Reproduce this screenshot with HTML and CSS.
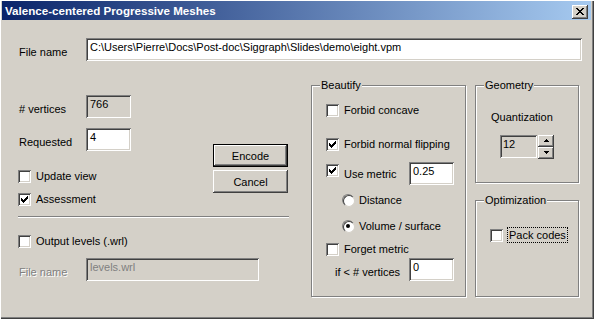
FILE: index.html
```html
<!DOCTYPE html>
<html>
<head>
<meta charset="utf-8">
<title>Valence-centered Progressive Meshes</title>
<link rel="stylesheet" href="styles.css">
</head>
<body>
<div class="window">
  <div class="titlebar">
    <span class="title">Valence-centered Progressive Meshes</span>
    <div class="close"><svg width="8" height="7" viewBox="0 0 8 7" shape-rendering="crispEdges"><path d="M0 0h2v1h-2zM6 0h2v1h-2zM1 1h2v1h-2zM5 1h2v1h-2zM2 2h4v1h-4zM3 3h2v1h-2zM2 4h4v1h-4zM1 5h2v1h-2zM5 5h2v1h-2zM0 6h2v1h-2zM6 6h2v1h-2z" fill="#000"/></svg></div>
  </div>
  <div class="client">
    <div class="file-row">
      <span class="lbl">File name</span>
      <div class="edit path">C:\Users\Pierre\Docs\Post-doc\Siggraph\Slides\demo\eight.vpm</div>
    </div>
    <div class="columns">
      <div class="left">
        <div class="upper">
          <div class="fields">
            <div class="field-row">
              <span class="lbl"># vertices</span>
              <div class="edit small readonly">766</div>
            </div>
            <div class="field-row r2">
              <span class="lbl">Requested</span>
              <div class="edit small">4</div>
            </div>
            <div class="check c-update"><span class="box"></span><span class="ctext">Update view</span></div>
            <div class="check c-assess"><span class="box"><svg width="9" height="9" viewBox="0 0 9 9" shape-rendering="crispEdges"><path d="M7 1h1v1h-1zM6 2h2v1h-2zM1 3h1v1h-1zM5 3h3v1h-3zM1 4h2v1h-2zM4 4h3v1h-3zM1 5h5v1h-5zM2 6h3v1h-3zM3 7h1v1h-1z" fill="#000"/></svg></span><span class="ctext">Assessment</span></div>
          </div>
          <div class="buttons">
            <div class="btn default"><span class="btn-face">Encode</span></div>
            <div class="btn cancel"><span class="btn-face">Cancel</span></div>
          </div>
        </div>
        <div class="separator"></div>
        <div class="check c-output"><span class="box"></span><span class="ctext">Output levels (.wrl)</span></div>
        <div class="field-row r-levels">
          <span class="lbl disabled-text">File name</span>
          <div class="edit levels disabled">levels.wrl</div>
        </div>
      </div>

      <div class="group beautify">
        <span class="legend">Beautify</span>
        <div class="check b1"><span class="box"></span><span class="ctext">Forbid concave</span></div>
        <div class="check b2"><span class="box"><svg width="9" height="9" viewBox="0 0 9 9" shape-rendering="crispEdges"><path d="M7 1h1v1h-1zM6 2h2v1h-2zM1 3h1v1h-1zM5 3h3v1h-3zM1 4h2v1h-2zM4 4h3v1h-3zM1 5h5v1h-5zM2 6h3v1h-3zM3 7h1v1h-1z" fill="#000"/></svg></span><span class="ctext">Forbid normal flipping</span></div>
        <div class="metric-row">
          <span class="box"><svg width="9" height="9" viewBox="0 0 9 9" shape-rendering="crispEdges"><path d="M7 1h1v1h-1zM6 2h2v1h-2zM1 3h1v1h-1zM5 3h3v1h-3zM1 4h2v1h-2zM4 4h3v1h-3zM1 5h5v1h-5zM2 6h3v1h-3zM3 7h1v1h-1z" fill="#000"/></svg></span>
          <span class="ctext metric-text">Use metric</span>
          <div class="edit small">0.25</div>
        </div>
        <div class="radio-row r-dist"><span class="radio"></span><span class="ctext">Distance</span></div>
        <div class="radio-row r-vol"><span class="radio on"></span><span class="ctext">Volume / surface</span></div>
        <div class="check b6"><span class="box"></span><span class="ctext">Forget metric</span></div>
        <div class="threshold-row">
          <span class="lbl thr-text">if &lt; # vertices</span>
          <div class="edit small">0</div>
        </div>
      </div>

      <div class="right">
        <div class="group geometry">
          <span class="legend">Geometry</span>
          <div class="quant">Quantization</div>
          <div class="spin-row">
            <div class="edit spin-edit">12</div>
            <div class="spin-btns">
              <div class="spin-btn"><svg width="5" height="3" viewBox="0 0 5 3" shape-rendering="crispEdges"><path d="M2 0h1v1h-1zM1 1h3v1h-3zM0 2h5v1h-5z" fill="#000"/></svg></div>
              <div class="spin-btn"><svg width="5" height="3" viewBox="0 0 5 3" shape-rendering="crispEdges"><path d="M0 0h5v1h-5zM1 1h3v1h-3zM2 2h1v1h-1z" fill="#000"/></svg></div>
            </div>
          </div>
        </div>
        <div class="group optimization">
          <span class="legend">Optimization</span>
          <div class="check pack"><span class="box"></span><span class="ctext focus">Pack codes</span></div>
        </div>
      </div>
    </div>
  </div>
</div>
</body>
</html>
```
FILE: styles.css
```css
* { box-sizing: border-box; }
html, body { margin: 0; padding: 0; }
body {
  width: 594px;
  height: 319px;
  overflow: hidden;
  background: #D4D0C8;
  font-family: "Liberation Sans", Arial, sans-serif;
  font-size: 11px;
  color: #000;
}

.window {
  width: 594px;
  height: 319px;
  background: #D4D0C8;
  padding: 1px 3px 3px 2px;
  box-shadow: inset 1px 1px 0 #fff, inset -1px -1px 0 #404040, inset -2px -2px 0 #808080;
  display: flex;
  flex-direction: column;
}

/* Title bar */
.titlebar {
  height: 19px;
  flex: none;
  background: linear-gradient(to right, #0A246A, #A6CAF0);
  display: flex;
  align-items: flex-start;
  padding-left: 3px;
  color: #fff;
}
.title {
  font-weight: bold;
  font-size: 11.6px;
  line-height: 19px;
  white-space: nowrap;
}
.close {
  margin-left: auto;
  margin-top: 4px;
  margin-right: 3px;
  width: 16px;
  height: 14px;
  background: #D4D0C8;
  box-shadow: inset -1px -1px 0 #404040, inset 1px 1px 0 #fff, inset -2px -2px 0 #808080;
  display: flex;
  align-items: center;
  justify-content: center;
  padding-bottom: 1px;
}
.close svg { display: block; }

/* Client area */
.client {
  padding: 18px 0 0 16px;
}

.lbl {
  display: block;
  width: 68px;
  padding-left: 1px;
  padding-top: 5px;
  white-space: nowrap;
}

.file-row {
  display: flex;
  align-items: center;
  height: 23px;
}

.edit {
  height: 23px;
  background: #fff;
  box-shadow: inset 1px 1px 0 #808080, inset -1px -1px 0 #fff, inset 2px 2px 0 #404040, inset -2px -2px 0 #D4D0C8;
  padding: 3px 3px 0 4px;
  line-height: 13px;
  white-space: nowrap;
  overflow: hidden;
}
.edit.path { width: 496px; }
.edit.small { width: 45px; }
.edit.readonly { background: #D4D0C8; }
.edit.disabled { background: #D4D0C8; color: #808080; }
.edit.levels { width: 173px; }

.disabled-text {
  color: #808080;
  text-shadow: 1px 1px 0 #fff;
}

.columns {
  display: flex;
  margin-top: 24px;
  align-items: flex-start;
}

/* Left column */
.left {
  width: 271px;
  padding-top: 10px;
}
.upper { display: flex; }
.fields { width: 195px; }
.field-row {
  display: flex;
  align-items: center;
  height: 23px;
}
.field-row.r2 { margin-top: 10px; }

.check {
  display: flex;
  align-items: center;
  height: 13px;
}
.box {
  flex: none;
  width: 13px;
  height: 13px;
  background: #fff;
  box-shadow: inset 1px 1px 0 #808080, inset -1px -1px 0 #fff, inset 2px 2px 0 #404040, inset -2px -2px 0 #D4D0C8;
  padding: 2px;
  display: block;
}
.box svg { display: block; }
.ctext {
  margin-left: 5px;
  white-space: nowrap;
  line-height: 13px;
}
.c-update { margin-top: 19px; }
.c-assess { margin-top: 10px; }

.buttons {
  padding-top: 49px;
  display: flex;
  flex-direction: column;
}
.btn {
  width: 75px;
  height: 23px;
  background: #D4D0C8;
  box-shadow: inset -1px -1px 0 #404040, inset 1px 1px 0 #fff, inset -2px -2px 0 #808080, inset 2px 2px 0 #D4D0C8;
  display: flex;
  align-items: center;
  justify-content: center;
  padding-top: 1px;
}
.btn.default {
  border: 1px solid #000;
  box-shadow: inset -1px -1px 0 #404040, inset 1px 1px 0 #fff, inset -2px -2px 0 #808080;
}
.btn.cancel { margin-top: 3px; }

.separator {
  margin-top: 10px;
  height: 2px;
  width: 271px;
  border-top: 1px solid #808080;
  border-bottom: 1px solid #fff;
}
.c-output { margin-top: 17px; }
.r-levels { margin-top: 10px; }

/* Group boxes */
.group {
  position: relative;
  border: 1px solid #808080;
  box-shadow: inset 1px 1px 0 #fff, 1px 1px 0 #fff;
}
.legend {
  position: absolute;
  top: -7px;
  left: 8px;
  padding: 0 1px;
  background: #D4D0C8;
  line-height: 13px;
  white-space: nowrap;
}

.beautify {
  margin-left: 22px;
  width: 155px;
  height: 212px;
  padding: 18px 11px 0 14px;
}
.b2 { margin-top: 21px; }
.metric-row {
  margin-top: 11px;
  display: flex;
  align-items: flex-start;
  height: 23px;
}
.metric-row .box { margin-top: 2px; }
.metric-text { padding-top: 6px; }
.metric-row .edit { margin-left: auto; }

.radio-row {
  display: flex;
  align-items: center;
  height: 12px;
  margin-left: 16px;
}
.r-dist { margin-top: 9px; }
.r-vol { margin-top: 14px; }
.radio {
  flex: none;
  position: relative;
  width: 12px;
  height: 12px;
  border-radius: 50%;
  border: 1px solid;
  border-color: #808080 #fff #fff #808080;
  display: block;
}
.radio::before {
  content: "";
  display: block;
  width: 10px;
  height: 10px;
  border-radius: 50%;
  border: 1px solid;
  border-color: #404040 #D4D0C8 #D4D0C8 #404040;
  background: #fff;
}
.radio.on::after {
  content: "";
  position: absolute;
  left: 3px;
  top: 3px;
  width: 4px;
  height: 4px;
  border-radius: 50%;
  background: #000;
}
.radio-row .ctext { margin-left: 5px; }

.b6 { margin-top: 11px; }
.threshold-row {
  margin-top: 2px;
  display: flex;
  align-items: center;
  height: 23px;
}
.thr-text {
  width: auto;
  padding-left: 9px;
}
.threshold-row .edit { margin-left: auto; }

/* Right column */
.right {
  margin-left: 9px;
  width: 105px;
  display: flex;
  flex-direction: column;
}
.geometry {
  width: 104px;
  height: 98px;
  padding: 0 0 0 15px;
}
.quant {
  margin-top: 25px;
  line-height: 13px;
}
.spin-row {
  display: flex;
  margin-top: 11px;
  margin-left: 9px;
}
.spin-edit {
  width: 37px;
  background: #D4D0C8;
  padding-left: 3px;
}
.spin-btns {
  display: flex;
  flex-direction: column;
  margin-left: 1px;
}
.spin-btn {
  width: 16px;
  height: 12px;
  background: #D4D0C8;
  box-shadow: inset -1px -1px 0 #404040, inset 1px 1px 0 #fff, inset -2px -2px 0 #808080;
  display: flex;
  align-items: center;
  justify-content: center;
  padding-bottom: 1px;
}
.spin-btn svg { display: block; }

.optimization {
  margin-top: 17px;
  width: 104px;
  height: 97px;
  padding: 26px 0 0 14px;
}
.pack { height: 16px; }
.focus {
  margin-left: 4px;
  border: 1px dotted #000;
  padding: 0 1px;
  line-height: 14px;
}
```
